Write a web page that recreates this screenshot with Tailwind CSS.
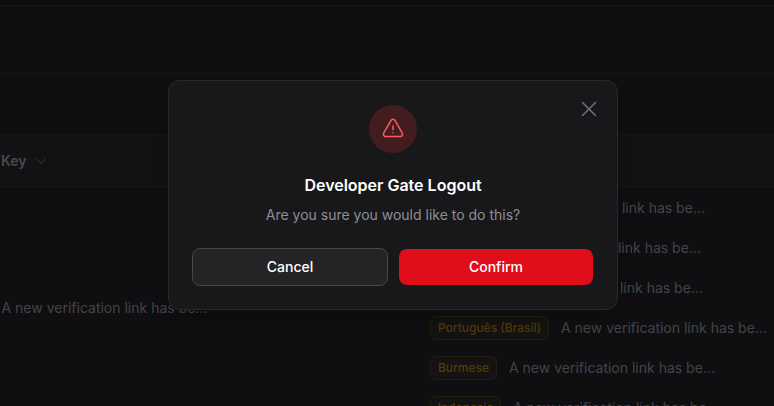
<!DOCTYPE html>
<html lang="en">
<head>
<meta charset="utf-8">
<title>Developer Gate Logout</title>
<script src="https://cdn.jsdelivr.net/npm/@tailwindcss/browser@4"></script>
</head>
<body class="relative h-[406px] w-[774px] overflow-hidden bg-[#0f0f11] font-['Inter',sans-serif] text-sm text-[#444447] antialiased">
  <main class="flex h-full flex-col overflow-hidden">
    <div class="h-[6px] shrink-0 border-b border-[#151517] bg-[#0c0c0e]"></div>
    <div class="h-[68px] shrink-0 border-b border-[#161618]"></div>
    <div class="h-[60px] shrink-0"></div>
    <div class="flex h-[54px] shrink-0 items-center gap-[8px] border-y border-[#161618] bg-[#121214] pl-px font-semibold text-[#49494c]">
      <span>Key</span>
      <svg class="h-3 w-3" viewBox="0 0 12 12" fill="none" stroke="#29292c" stroke-width="1.2" stroke-linecap="round" stroke-linejoin="round"><path d="M1.5 4L6 8.5L10.5 4"/></svg>
    </div>
    <div class="flex h-[240px] shrink-0">
      <div class="flex w-[430px] shrink-0 items-center pl-[1.5px]">A new verification link has be...</div>
      <div class="flex flex-col gap-4 pt-2 whitespace-nowrap">
        <div class="flex h-6 items-center gap-3"><span class="h-6 w-[57px] rounded-md border border-[#241c10] bg-[#141311]"></span><span>A new verification link has be...</span></div>
        <div class="flex h-6 items-center gap-3"><span class="h-6 w-[53px] rounded-md border border-[#241c10] bg-[#141311]"></span><span>A new verification link has be...</span></div>
        <div class="flex h-6 items-center gap-3"><span class="h-6 w-[55px] rounded-md border border-[#241c10] bg-[#141311]"></span><span>A new verification link has be...</span></div>
        <div class="flex h-6 items-center gap-3"><span class="flex h-6 w-[119px] items-center justify-center rounded-md border border-[#241c10] bg-[#141311] text-xs font-medium text-[#533a0d]">Português (Brasil)</span><span>A new verification link has be...</span></div>
        <div class="flex h-6 items-center gap-3"><span class="flex h-6 w-[67px] items-center justify-center rounded-md border border-[#241c10] bg-[#141311] text-xs font-medium text-[#533a0d]">Burmese</span><span>A new verification link has be...</span></div>
        <div class="flex h-6 items-center gap-3"><span class="flex h-6 w-[71px] items-center justify-center rounded-md border border-[#241c10] bg-[#141311] text-xs font-medium text-[#533a0d]">Indonesia</span><span>A new verification link has be...</span></div>
      </div>
    </div>
  </main>

  <section role="dialog" class="absolute top-[80px] left-[168px] flex h-[230px] w-[450px] flex-col items-center rounded-xl border border-[#29292c] bg-[#18181b] pt-6 shadow-xl">
    <button class="absolute top-[16px] right-[16px] flex h-6 w-6 items-center justify-center" aria-label="Close">
      <svg class="h-6 w-6" viewBox="0 0 24 24" fill="none" stroke="#707078" stroke-width="1.5" stroke-linecap="round"><path d="M5.5 5.5l13 13M18.5 5.5l-13 13"/></svg>
    </button>
    <div class="flex h-12 w-12 items-center justify-center rounded-full bg-[#431c20]">
      <svg class="h-6 w-6" viewBox="0 0 24 24" fill="none" stroke="#f85c5f" stroke-width="1.5" stroke-linecap="round" stroke-linejoin="round"><path d="M12 9v3.75m-9.303 3.376c-.866 1.5.217 3.374 1.948 3.374h14.71c1.73 0 2.813-1.874 1.948-3.374L13.949 3.378c-.866-1.5-3.032-1.5-3.898 0L2.697 16.126zM12 15.75h.007v.008H12v-.008z"/></svg>
    </div>
    <h2 class="mt-5 text-base leading-6 font-semibold text-white">Developer Gate Logout</h2>
    <p class="mt-2 leading-5 text-[#8e8e98]">Are you sure you would like to do this?</p>
    <div class="mt-[23px] flex w-[402px] items-center gap-[11px] font-medium text-white">
      <button class="h-[38px] w-[196px] rounded-lg border border-[#48484b] bg-[#242427]">Cancel</button>
      <button class="h-9 w-[194px] rounded-lg bg-[#e00d1b]">Confirm</button>
    </div>
  </section>
</body>
</html>
